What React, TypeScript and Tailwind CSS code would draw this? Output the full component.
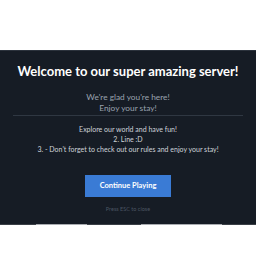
export default function App() {
  return (
    <div className="w-[256px] h-[256px] bg-white flex flex-col" style={{ fontFamily: 'Lato, "Noto Sans", sans-serif' }}>
      <div className="h-[50px] bg-white" />
      <div className="h-[174px] bg-[#161c25] border-t border-[#2b323c] flex flex-col items-center">
        <div className="mt-[11px] text-[13px] leading-[18px] font-bold text-white">Welcome to our super amazing server!</div>
        <div className="mt-[12px] flex flex-col items-center text-[8.3px] leading-[11px] text-[#9aa3af]">
          <span>We&apos;re glad you&apos;re here!</span>
          <span>Enjoy your stay!</span>
        </div>
        <div className="mt-[1px] w-[230px] h-px bg-[#2f3742]" />
        <div className="mt-[8px] flex flex-col items-center text-[7px] leading-[10px] text-[#cfd4da]">
          <span>Explore our world and have fun!</span>
          <span>2. Line :D</span>
          <span>3. - Don&apos;t forget to check out our rules and enjoy your stay!</span>
        </div>
        <div className="mt-[21px] w-[86px] h-[22px] bg-[#3a7bd5] flex items-center justify-center text-[7.5px] font-bold text-white">Continue Playing</div>
        <div className="mt-[8px] text-[5.5px] leading-[8px] text-[#4b5563]">Press ESC to close</div>
      </div>
      <div className="h-px flex">
        <div className="w-[36px] bg-[#3a3f46]" />
        <div className="w-[51px] bg-[#a9acb1]" />
        <div className="w-[54px] bg-[#3a3f46]" />
        <div className="w-[81px] bg-[#a9acb1]" />
        <div className="flex-1 bg-[#3a3f46]" />
      </div>
    </div>
  );
}
